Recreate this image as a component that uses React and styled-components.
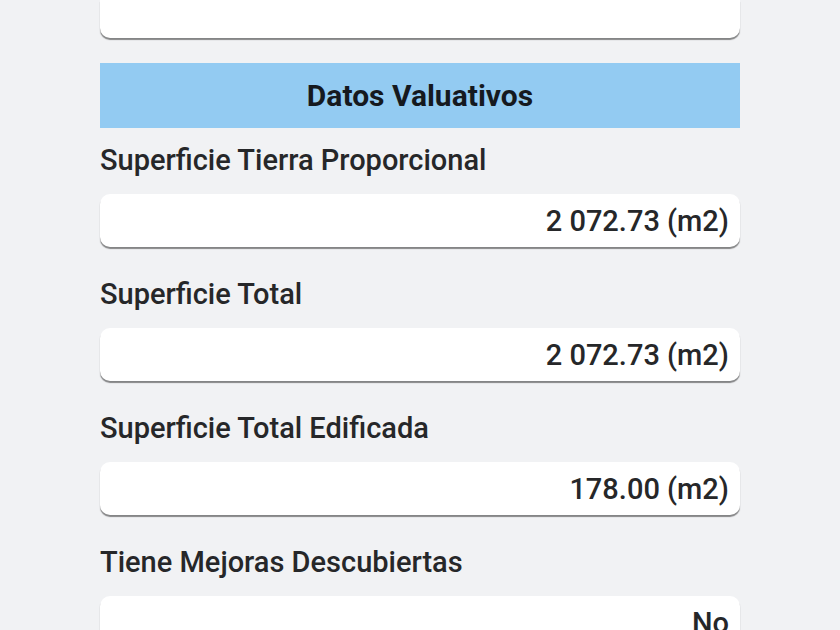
import React from 'react'
import styled, { createGlobalStyle } from 'styled-components'

const GlobalStyle = createGlobalStyle`
  html, body {
    margin: 0;
    padding: 0;
    background: #f1f2f4;
    font-family: Roboto, "Liberation Sans", sans-serif;
    overflow: hidden;
  }
`

const Page = styled('div')`
  width: 640px;
  padding: 0 100px;
  display: flex;
  flex-direction: column;
`

const TopCard = styled('div')`
  flex-shrink: 0;
  height: 38px;
  background: #ffffff;
  border-radius: 0 0 10px 10px;
  box-shadow: 0 2px 1px rgba(0, 0, 0, 0.45);
  margin-bottom: 25px;
`

const SectionHeader = styled('div')`
  flex-shrink: 0;
  height: 65px;
  background: #93cbf2;
  display: flex;
  align-items: center;
  justify-content: center;
  font-size: 30px;
  font-weight: 700;
  color: #15191f;
  margin-bottom: 15px;
`

const FieldList = styled('div')`
  display: flex;
  flex-direction: column;
  gap: 30px;
`

const Field = styled('div')`
  display: flex;
  flex-direction: column;
`

const Label = styled('div')`
  font-size: 29px;
  line-height: 34px;
  font-weight: 500;
  color: #262729;
  margin-bottom: 17px;
`

const ValueBox = styled('div')`
  flex-shrink: 0;
  height: 53px;
  background: #ffffff;
  border-radius: 10px;
  box-shadow: 0 2px 1px rgba(0, 0, 0, 0.45);
  display: flex;
  align-items: center;
  justify-content: flex-end;
  padding: 0 11px;
  font-size: 29px;
  font-weight: 500;
  color: #262729;
`

const fields = [
  { label: 'Superficie Tierra Proporcional', value: '2 072.73 (m2)' },
  { label: 'Superficie Total', value: '2 072.73 (m2)' },
  { label: 'Superficie Total Edificada', value: '178.00 (m2)' },
  { label: 'Tiene Mejoras Descubiertas', value: 'No' },
]

const App = () => (
  <>
    <GlobalStyle />
    <Page>
      <TopCard />
      <SectionHeader>Datos Valuativos</SectionHeader>
      <FieldList>
        {fields.map((f) => (
          <Field key={f.label}>
            <Label>{f.label}</Label>
            <ValueBox>{f.value}</ValueBox>
          </Field>
        ))}
      </FieldList>
    </Page>
  </>
)

export default App
